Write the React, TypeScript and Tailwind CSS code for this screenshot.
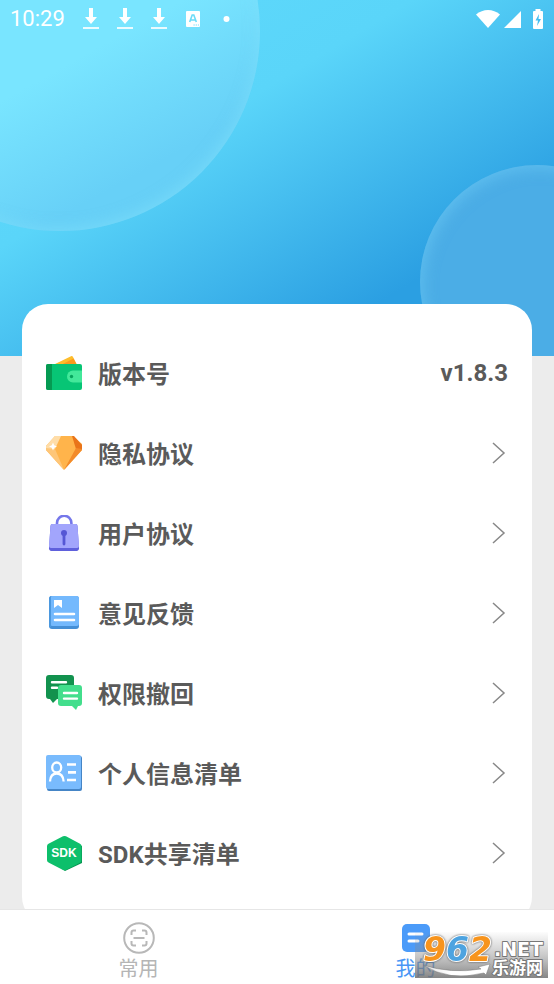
import React from 'react';

interface MenuItem {
  label: string;
  icon: React.ReactNode;
}

function WalletIcon() {
  return (
    <svg viewBox="0 0 36 36" className="size-9">
      <path d="M7 10 25 1.3a1.5 1.5 0 0 1 2 .7l4 8z" fill="#fdbd2c" />
      <path d="M15 10 27.5 3.5 31 10z" fill="#fb9a1c" />
      <rect x="0" y="9" width="36" height="26" rx="2" fill="#07c575" />
      <path d="M2 9h4v26H2a2 2 0 0 1-2-2V11a2 2 0 0 1 2-2z" fill="#059a52" />
      <path d="M36 15.500h-9a6 6 0 0 0 0 12h9z" fill="#43e89a" />
      <circle cx="25.500" cy="21.500" r="1.700" fill="#07a45e" />
    </svg>
  );
}

function DiamondIcon() {
  return (
    <svg viewBox="0 0 36 36" className="size-9">
      <path d="M9 1h18l9 8v6L18 35 0 15v-4z" fill="#ffb44b" />
      <path d="M9 1h6L9 14 0 15v-4z" fill="#ffdda8" />
      <path d="M0 13l9 1 9 21L0 15z" fill="#fec678" />
      <path d="M26 1h2l8 9v5l-6-1z" fill="#e9741a" />
      <path d="M30 13l6 1v1L18 35z" fill="#f38b2a" />
      <path d="M7 7.500 8.200 10.300 11 11.500 8.200 12.700 7 15.500 5.800 12.700 3 11.500 5.800 10.300z" fill="#fff" />
    </svg>
  );
}

function LockIcon() {
  return (
    <svg viewBox="0 0 36 36" className="size-9">
      <path d="M11 11V8a7.200 7.200 0 0 1 14.400 0v3" fill="none" stroke="#7577ea" strokeWidth="2.600" />
      <path d="M6.500 9h23a2 2 0 0 1 2 2L33 33a2.500 2.500 0 0 1-2.500 3h-25A2.500 2.500 0 0 1 3 33l1.500-22a2 2 0 0 1 2-2z" fill="#5f60dc" />
      <path d="M6.500 9h23a2 2 0 0 1 2 2L33 31a2 2 0 0 1-2 2H5a2 2 0 0 1-2-2l1.500-20a2 2 0 0 1 2-2z" fill="#a2a5fc" />
      <circle cx="18" cy="18" r="3" fill="#5557d5" />
      <path d="M18 18v11" stroke="#5557d5" strokeWidth="2.800" strokeLinecap="round" />
    </svg>
  );
}

function BookIcon() {
  return (
    <svg viewBox="0 0 36 36" className="size-9">
      <rect x="3" y="1" width="30" height="33" rx="3" fill="#458fd6" />
      <rect x="4" y="1" width="29" height="30" rx="2.500" fill="#74b9fd" />
      <path d="M3 4a3 3 0 0 1 2-3v31H3z" fill="#4b98df" />
      <path d="M8 5h8v8l-4-3-4 3z" fill="#fff" />
      <path d="M9 19h19M9 25h19" stroke="#fff" strokeWidth="2.600" strokeLinecap="round" />
    </svg>
  );
}

function ChatIcon() {
  return (
    <svg viewBox="0 0 36 36" className="size-9">
      <path d="M3 0h22a3 3 0 0 1 3 3v18a3 3 0 0 1-3 3H11l-4 4-3-4H3a3 3 0 0 1-3-3V3a3 3 0 0 1 3-3z" fill="#12924e" />
      <path d="M6 7.300h14M6 12.700h5" stroke="#fff" strokeWidth="2.400" strokeLinecap="round" />
      <path d="M15 10h18a3 3 0 0 1 3 3v15a3 3 0 0 1-3 3h-1l-2 4-4-4H15a3 3 0 0 1-3-3V13a3 3 0 0 1 3-3z" fill="#42de8c" />
      <path d="M18 18h13M18 23.600h13" stroke="#fff" strokeWidth="2.400" strokeLinecap="round" />
    </svg>
  );
}

function ProfileListIcon() {
  return (
    <svg viewBox="0 0 36 36" className="size-9">
      <rect x="1" y="1" width="35" height="35" rx="2" fill="#4585c6" />
      <rect x="0" y="0" width="35" height="34" rx="2" fill="#79bbfd" />
      <g fill="none" stroke="#fff" strokeWidth="2.300">
        <ellipse cx="10.700" cy="12.500" rx="4.500" ry="5" />
        <path d="M4 26.500c.3-5 2.800-8 6.700-8s6.600 3 6.900 8" />
        <path d="M21 9.500h9M22 17.300h8M21 25h9" strokeWidth="2.700" />
      </g>
    </svg>
  );
}

function SdkIcon() {
  return (
    <svg viewBox="0 0 36 36" className="size-9">
      <path d="M18 3 36 11v17l-17 8-8-6z" fill="#079350" />
      <path d="M17 1.300q1.500-.8 3 0l14 7.500q1.500.8 1.500 2.500v14q0 1.700-1.500 2.500l-14 7.300q-1.500.8-3 0l-14-7.300Q1 27 1 25.300v-14q0-1.700 1.500-2.500z" fill="#0dbf6b" />
      <text x="18" y="22" textAnchor="middle" fill="#fff" className="font-['Liberation_Sans'] text-[12px] font-bold">SDK</text>
    </svg>
  );
}

function DownloadIcon() {
  return (
    <svg viewBox="0 0 16 22" className="h-[22px] w-4">
      <path d="M6 0h4v9h4l-6 7-6-7h4z" fill="#fff" />
      <path d="M0 20h16" stroke="#fff" strokeWidth="2" opacity=".85" />
    </svg>
  );
}

function StatusBar() {
  return (
    <div className="relative flex h-[38px] items-center justify-between pr-[10px] pl-[10px] text-white">
      <div className="flex items-center gap-[18px]">
        <span className="text-[22px] leading-6">10:29</span>
        <DownloadIcon />
        <DownloadIcon />
        <DownloadIcon />
        <svg viewBox="0 0 16 16" className="size-4">
          <rect x="1" y="0" width="14" height="16" rx="1" fill="#fff" />
          <path d="M4.700 11 7.200 4h1.600l2.500 7M5.800 9h4.400" fill="none" stroke="#6bdcf8" strokeWidth="1.600" />
          <path d="M8.500 14h1.200m1 0h1.200m1 0h1" stroke="#6bdcf8" />
        </svg>
        <svg viewBox="0 0 16 16" className="size-4">
          <circle cx="7.500" cy="8" r="3" fill="#fff" />
        </svg>
      </div>
      <div className="flex items-center">
        <svg viewBox="0 0 24 20" className="mr-1 h-5 w-6">
          <path d="M0 5.500C7-.500 17-.500 24 5.500L12 19z" fill="#fff" />
        </svg>
        <svg viewBox="0 0 18 20" className="mr-[10px] h-5 w-[18px]">
          <path d="M17 2v17H0z" fill="#fff" />
        </svg>
        <svg viewBox="0 0 12 20" className="h-5 w-3">
          <path d="M3.500 0h5v2H10a1 1 0 0 1 1 1v16a1 1 0 0 1-1 1H2a1 1 0 0 1-1-1V3a1 1 0 0 1 1-1h1.500z" fill="#fff" />
          <path d="M7 5 3.500 11.500H6L5 17l4-7H6.500z" fill="#43bdf0" />
        </svg>
      </div>
    </div>
  );
}

// Corner logo that sits over the right end of the tab bar
function SiteMark() {
  return (
    <svg viewBox="0 -12 133 58" className="absolute right-[6px] bottom-[6px] h-[58px] w-[133px]">
      <defs>
        <linearGradient id="plate" x1="0" y1="0" x2="0" y2="1">
          <stop offset="0" stopColor="#8a8a8a" stopOpacity="0.02" />
          <stop offset="0.5" stopColor="#8a8a8a" stopOpacity="0.45" />
          <stop offset="1" stopColor="#707070" stopOpacity="0.85" />
        </linearGradient>
        <linearGradient id="swoosh" x1="0" y1="0" x2="1" y2="0">
          <stop offset="0" stopColor="#fff" stopOpacity="0.7" />
          <stop offset="0.4" stopColor="#fff" />
        </linearGradient>
      </defs>
      <rect width="133" height="46" fill="url(#plate)" />
      <path d="M8 33q28 9 58 4l-3-2 12-3-4 11-2-2Q34 50 8 33z" fill="url(#swoosh)" stroke="#777" strokeWidth=".5" />
      <text
        x="8"
        y="29"
        fill="#f7941d"
        stroke="#fff"
        strokeWidth="2"
        paintOrder="stroke"
        strokeLinejoin="round"
        className="font-['DejaVu_Sans'] text-[33px] font-bold italic drop-shadow-[0_0_1px_#555]"
      >
        9<tspan fill="#4da3e0">6</tspan>2
      </text>
      <g fill="#fff" stroke="#777" strokeWidth="2" paintOrder="stroke" strokeLinejoin="round" className="font-bold">
        <text x="79" y="24" className="font-['DejaVu_Sans'] text-[19px]">.NET</text>
        <text x="77" y="42" className="text-[17px]">乐游网</text>
      </g>
    </svg>
  );
}

const items: MenuItem[] = [
  { label: '隐私协议', icon: <DiamondIcon /> },
  { label: '用户协议', icon: <LockIcon /> },
  { label: '意见反馈', icon: <BookIcon /> },
  { label: '权限撤回', icon: <ChatIcon /> },
  { label: '个人信息清单', icon: <ProfileListIcon /> },
  { label: 'SDK共享清单', icon: <SdkIcon /> },
];

export default function App() {
  return (
    <div className="flex min-h-screen flex-col bg-[#ececec] font-['Roboto','Noto_Sans_CJK_SC',sans-serif]">
      <header className="relative h-[356px] overflow-hidden bg-[linear-gradient(149deg,#5fdafc_0%,#5ad5f9_36%,#2b9fe2_77%,#2b9fe2_100%)]">
        <div className="absolute -top-[169px] -left-[140px] size-[400px] rounded-full bg-[linear-gradient(151deg,#79e5ff_0%,#79e5ff_56%,#67d0f7_80%)] shadow-[inset_-2px_-3px_14px_rgba(130,225,252,0.5)]" />
        <div className="absolute top-[165px] -right-[100px] size-[234px] rounded-full bg-[#4bade6] shadow-[inset_3px_4px_14px_rgba(105,200,243,0.6)]" />
        <StatusBar />
      </header>

      <main className="relative -mt-[52px] flex flex-1 flex-col overflow-hidden px-[22px]">
        <ul className="-mb-[14px] flex-1 rounded-[26px] bg-white px-6 pt-[29px] pb-6 text-2xl font-bold text-[#5a5a5a]">
          <li className="flex h-20 items-center gap-4">
            <WalletIcon />
            <span className="pt-[3px]">版本号</span>
            <span className="ml-auto">v1.8.3</span>
          </li>
          {items.map(item => (
            <li key={item.label}>
              <button type="button" className="flex h-20 w-full items-center gap-4 text-left">
                {item.icon}
                <span className="pt-[3px]">{item.label}</span>
                <svg viewBox="0 0 16 24" className="ml-auto h-6 w-4">
                  <path d="M1 2l11 10L1 22" fill="none" stroke="#888" strokeWidth="1.500" />
                </svg>
              </button>
            </li>
          ))}
        </ul>
      </main>

      <nav className="relative flex h-[75px] border-t border-[#e6e6e6] bg-white text-xl leading-[30px]">
        <button type="button" className="flex flex-1 flex-col items-center pt-3 text-[#b5b5b5]">
          <svg viewBox="0 0 32 32" className="size-8" fill="none" stroke="#b8b8b8" strokeWidth="2">
            <circle cx="16" cy="16" r="14.800" />
            <path d="M8.500 13v-2.500q0-2 2-2H13M19 8.500h2.500q2 0 2 2V13M23.500 19v2.500q0 2-2 2H19M13 23.500h-2.500q-2 0-2-2V19M10.500 16h11" />
          </svg>
          <span>常用</span>
        </button>
        <button type="button" className="flex flex-1 flex-col items-center pt-3 text-[#4896f5]">
          <svg viewBox="0 0 32 32" className="size-8">
            <rect x="2" y="2" width="28" height="28" rx="5" fill="#4b9bf9" />
            <path d="M9 12h13M9 19h9" stroke="#fff" strokeWidth="3" strokeLinecap="round" />
          </svg>
          <span>我的</span>
        </button>
        <SiteMark />
      </nav>
    </div>
  );
}
